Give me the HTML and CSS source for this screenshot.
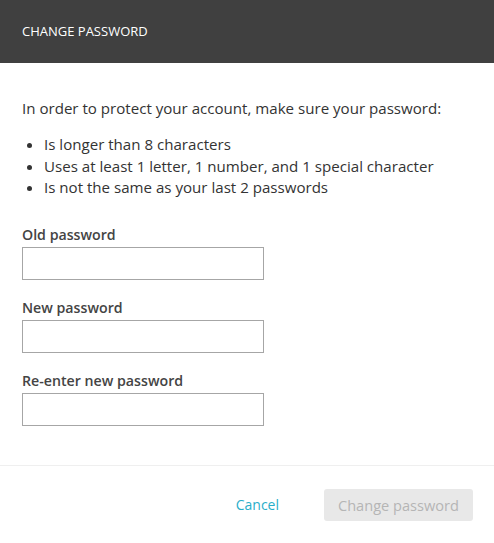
FILE: index.html
```html
<!DOCTYPE html>
<html>
<head>
<meta charset="utf-8">
<link rel="stylesheet" href="styles.css">
</head>
<body>
<div class="dialog">
  <header class="header"><h1 class="title">CHANGE PASSWORD</h1></header>
  <main class="content">
    <p class="intro">In order to protect your account, make sure your password:</p>
    <ul class="rules">
      <li>Is longer than 8 characters</li>
      <li>Uses at least 1 letter, 1 number, and 1 special character</li>
      <li>Is not the same as your last 2 passwords</li>
    </ul>
    <div class="field">
      <label class="label">Old password</label>
      <input class="input" type="password">
    </div>
    <div class="field">
      <label class="label">New password</label>
      <input class="input" type="password">
    </div>
    <div class="field">
      <label class="label">Re-enter new password</label>
      <input class="input" type="password">
    </div>
  </main>
  <footer class="footer">
    <a class="cancel">Cancel</a>
    <button class="submit" disabled>Change password</button>
  </footer>
</div>
</body>
</html>
```
FILE: styles.css
```css
html, body {
  margin: 0;
  padding: 0;
  background: #fff;
}
body {
  font-family: "Open Sans", "Noto Sans", sans-serif;
  color: #333;
}
.dialog {
  width: 494px;
  height: 543px;
  display: flex;
  flex-direction: column;
}
.header {
  height: 63px;
  flex: none;
  background: #404040;
  display: flex;
  align-items: center;
  padding: 0 22px;
}
.title {
  margin: 0 0 1px;
  font-size: 13px;
  font-weight: 400;
  color: #fff;
}
.content {
  padding: 34px 22px 0;
  height: 403px;
  flex: none;
  box-sizing: border-box;
  border-bottom: 1px solid #efefef;
}
.intro {
  margin: 0;
  font-size: 15.1px;
  line-height: 22px;
}
.rules {
  margin: 15px 0 0;
  padding: 0 0 0 22px;
  font-size: 15.1px;
  line-height: 21.5px;
}
.field {
  display: flex;
  flex-direction: column;
  margin-top: 18.3px;
}
.field:first-of-type {
  margin-top: 26px;
}
.label {
  font-size: 14.2px;
  font-weight: 600;
  line-height: 20px;
  color: #444;
  margin-bottom: 2px;
}
.input {
  width: 242px;
  height: 33px;
  box-sizing: border-box;
  border: 1px solid #a6a6a6;
  margin: 0;
  padding: 0 6px;
}
.footer {
  flex: 1;
  display: flex;
  align-items: center;
  justify-content: flex-end;
  padding: 0 21px 0 0;
  gap: 45px;
}
.cancel {
  font-size: 14px;
  color: #2aaec9;
  cursor: pointer;
}
.submit {
  width: 149px;
  height: 32px;
  background: #e8e8e8;
  border: none;
  border-radius: 3px;
  color: #b5b5b5;
  font-family: "Open Sans", "Noto Sans", sans-serif;
  font-size: 14.6px;
  padding: 0;
}
```
